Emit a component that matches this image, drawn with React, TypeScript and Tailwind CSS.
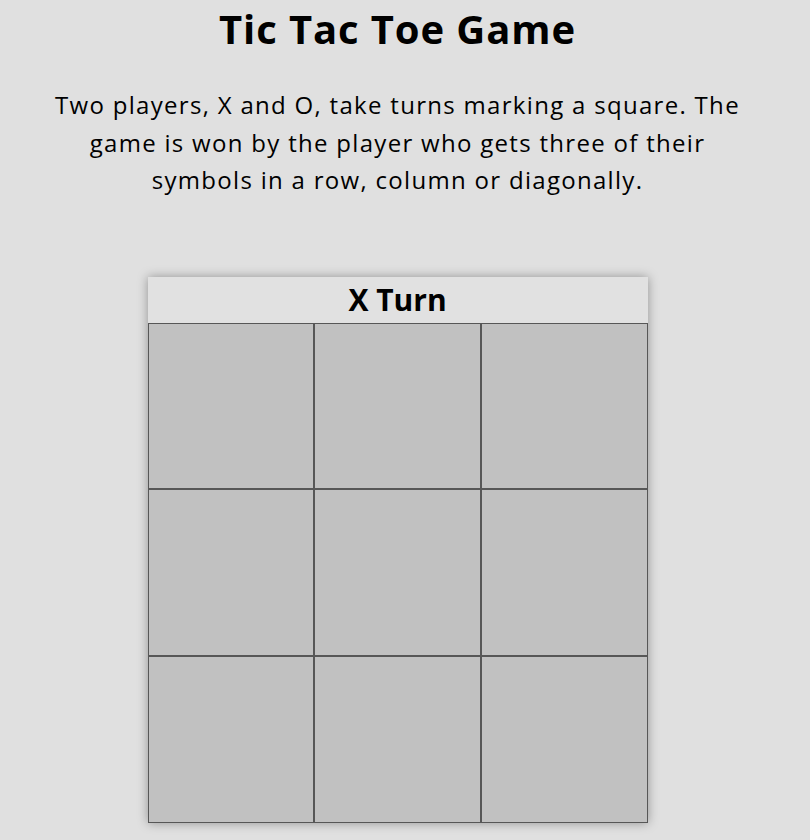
export default function App() {
  const cells = Array.from({ length: 9 });
  return (
    <div className="h-[840px] w-full overflow-hidden bg-[#e0e0e0]">
      <div className="w-[795px] flex flex-col items-center" style={{ fontFamily: '"Open Sans", "Noto Sans", sans-serif' }}>
        <h1 className="pt-[5px] text-[40px] leading-[48px] font-bold text-black tracking-[0.9px]">
          Tic Tac Toe Game
        </h1>
        <p className="mt-[33px] w-[720px] text-center text-[24px] leading-[37.5px] text-black tracking-[1.3px]">
          Two players, X and O, take turns marking a square. The
          <br />
          game is won by the player who gets three of their
          <br />
          symbols in a row, column or diagonally.
        </p>
        <div className="mt-[78px] w-[500px] shadow-[0_0_10px_rgba(0,0,0,0.35)]">
          <div className="h-[46px] bg-[#e1e1e1] flex items-center justify-center text-[30px] font-bold text-black leading-none">
            X Turn
          </div>
          <div className="grid grid-cols-3 grid-rows-3 h-[500px]">
            {cells.map((_, i) => (
              <div key={i} className="bg-[#c1c1c1] border border-[#575757]" />
            ))}
          </div>
        </div>
      </div>
    </div>
  );
}
